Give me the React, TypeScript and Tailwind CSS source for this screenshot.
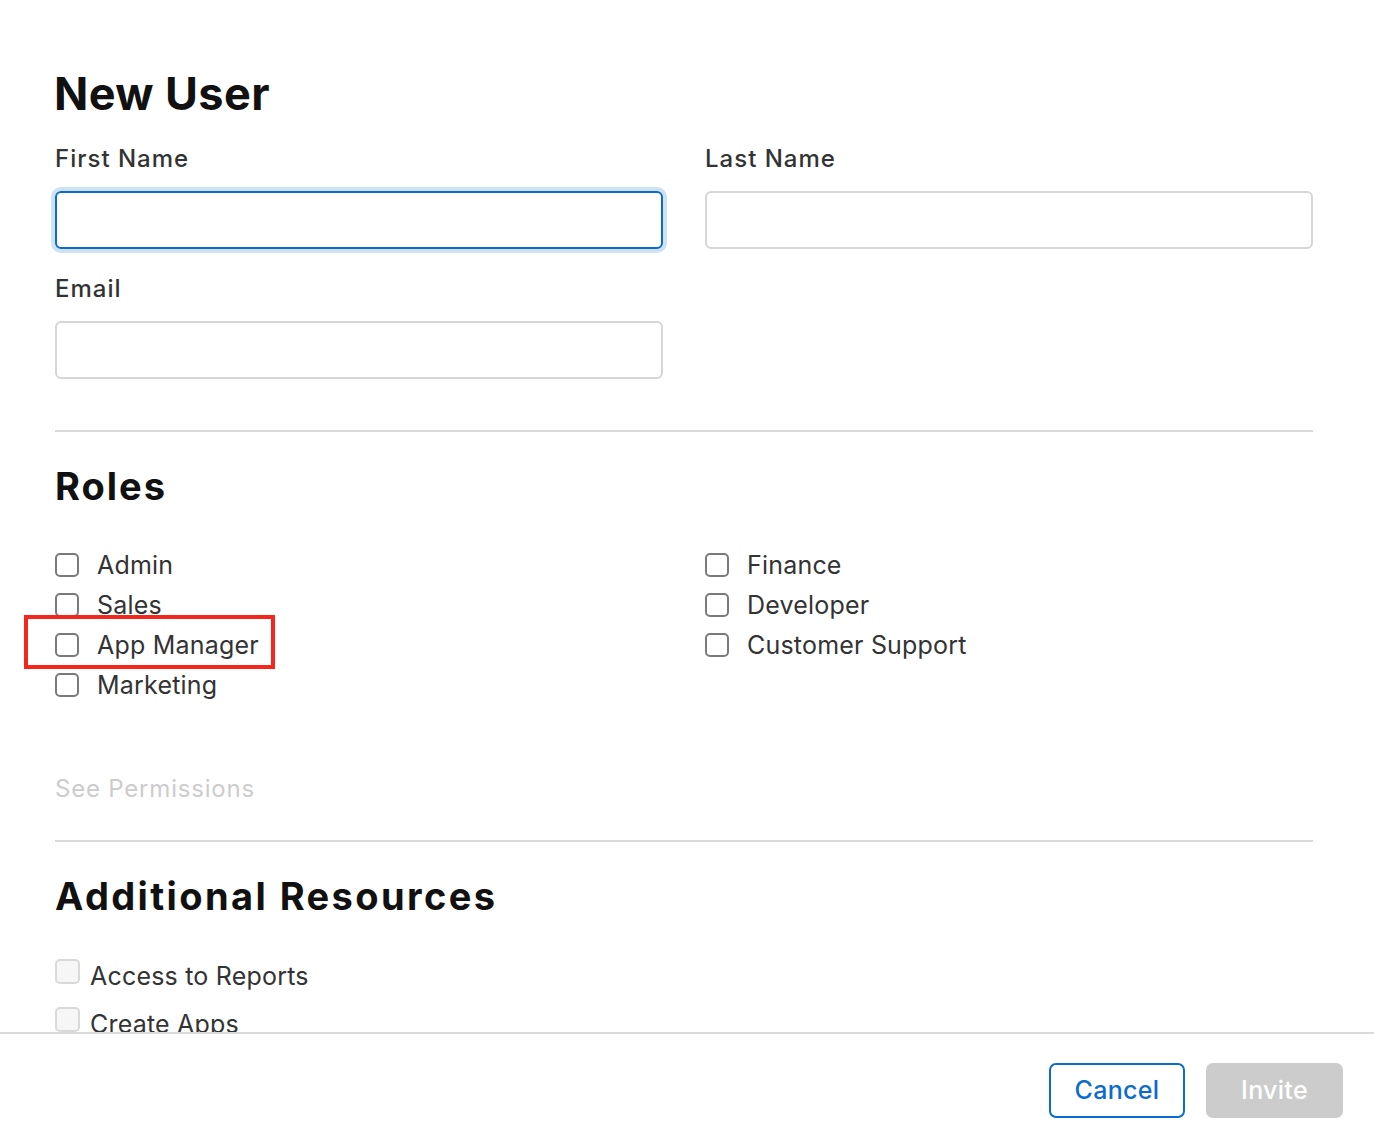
import React from "react";

const font = { fontFamily: "Inter, 'Noto Sans', sans-serif" };

function Box({ disabled = false }: { disabled?: boolean }) {
  return disabled ? (
    <span className="block w-[25px] h-[25px] shrink-0 rounded-[5px] border-2 border-[#d9d9d9] bg-[#f6f6f6]" />
  ) : (
    <span className="block w-[24px] h-[24px] shrink-0 rounded-[5px] border-2 border-[#7a7a7a] bg-white" />
  );
}

function Role({ label, marked = false }: { label: string; marked?: boolean }) {
  return (
    <div className="relative flex h-[40px] items-center gap-[18px]">
      <Box />
      <span className="text-[25px] leading-[40px] text-[#333] tracking-[0.2px]">{label}</span>
      {marked && (
        <span className="pointer-events-none absolute -left-[31px] -top-[10px] w-[251px] h-[54px] border-[4px] border-[#f5261b]" />
      )}
    </div>
  );
}

export default function App() {
  return (
    <div className="flex h-[1140px] w-full flex-col bg-white overflow-hidden" style={font}>
      <div className="flex-1 overflow-hidden pl-[55px] pr-[61px] pt-[66px]">
        <h1 className="-ml-[1px] text-[45px] leading-[56px] font-bold text-[#111] tracking-[0.4px]">New User</h1>
        <div className="mt-[23px] grid grid-cols-2 gap-x-[42px]">
          <div>
            <label className="block text-[24px] leading-[28px] font-medium text-[#333] tracking-[1px]">First Name</label>
            <div className="mt-[18px] h-[58px] rounded-[6px] border-2 border-[#0a6bc9] ring-4 ring-[#cfe1f4]" />
          </div>
          <div>
            <label className="block text-[24px] leading-[28px] font-medium text-[#333] tracking-[1px]">Last Name</label>
            <div className="mt-[18px] h-[58px] rounded-[6px] border-2 border-[#d6d6d6]" />
          </div>
          <div className="mt-[26px]">
            <label className="block text-[24px] leading-[28px] font-medium text-[#333] tracking-[1px]">Email</label>
            <div className="mt-[18px] h-[58px] rounded-[6px] border-2 border-[#d6d6d6]" />
          </div>
        </div>
        <div className="mt-[51px] h-[2px] bg-[#d9d9d9]" />
        <h2 className="mt-[34px] text-[38px] leading-[40px] font-bold text-[#111] tracking-[2px]">Roles</h2>
        <div className="mt-[39px] grid grid-cols-2 gap-x-[42px]">
          <div>
            <Role label="Admin" />
            <Role label="Sales" />
            <Role label="App Manager" marked />
            <Role label="Marketing" />
          </div>
          <div>
            <Role label="Finance" />
            <Role label="Developer" />
            <Role label="Customer Support" />
          </div>
        </div>
        <div className="mt-[68px] text-[24px] leading-[32px] text-[#cccccc] tracking-[0.8px]">See Permissions</div>
        <div className="mt-[35px] h-[2px] bg-[#d9d9d9]" />
        <h2 className="mt-[34px] text-[38px] leading-[40px] font-bold text-[#111] tracking-[2.4px]">Additional Resources</h2>
        <div className="mt-[43px]">
          <div className="flex h-[48px] items-start gap-[10px]">
            <Box disabled />
            <span className="text-[25px] leading-[34px] text-[#333] tracking-[0.2px]">Access to Reports</span>
          </div>
          <div className="flex h-[48px] items-start gap-[10px]">
            <Box disabled />
            <span className="text-[25px] leading-[34px] text-[#333] tracking-[0.2px]">Create Apps</span>
          </div>
        </div>
      </div>
      <div className="flex h-[108px] shrink-0 items-start justify-end gap-[21px] border-t-2 border-[#d9d9d9] pr-[31px] pt-[29px]">
        <button className="h-[55px] w-[136px] rounded-[7px] border-2 border-[#0a6ccf] text-[25px] font-medium text-[#0a6ccf] tracking-[0.3px]">Cancel</button>
        <button className="h-[55px] w-[137px] rounded-[7px] bg-[#cccccc] text-[25px] font-medium text-white tracking-[0.3px]">Invite</button>
      </div>
    </div>
  );
}
